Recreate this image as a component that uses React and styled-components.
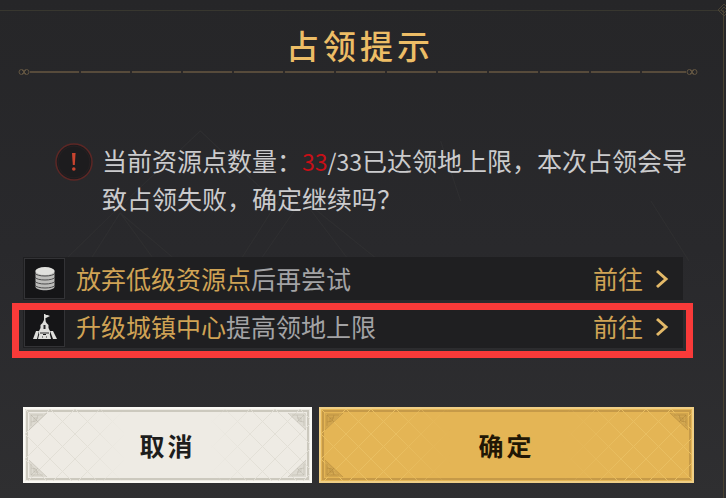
import styled, { createGlobalStyle } from "styled-components";

const GlobalStyle = createGlobalStyle`
  * { box-sizing: border-box; }
  body {
    margin: 0;
    background: #29292b;
    font-family: "Noto Sans CJK SC", sans-serif;
  }
  button {
    font-family: inherit;
    padding: 0;
    border: 0;
    cursor: pointer;
  }
`;

const ROWS = [
  { id: "abandon", icon: "coins", strong: "放弃低级资源点", rest: "后再尝试" },
  { id: "upgrade", icon: "castle", strong: "升级城镇中心", rest: "提高领地上限", marked: true },
];

const Knot = () => (
  <KnotSvg viewBox="0 0 12 8" fill="none" stroke="#625541" aria-hidden="true">
    <circle cx="3.5" cy="4" r="2.5" />
    <circle cx="8.5" cy="4" r="2.5" />
    <path d="M4 2l4 4M4 6l4-4" />
  </KnotSvg>
);

const CoinsIcon = () => (
  <svg width="22" height="28" viewBox="0 0 22 28" aria-hidden="true">
    <path d="M1.500 5.500v16c0 5 19 5 19 0v-16z" fill="#bcbcba" />
    <ellipse cx="11" cy="6" rx="9.500" ry="4" fill="#e0e0dd" />
    <path
      d="M1 8c1 4 19 4 20 0M1 12c1 4 19 4 20 0M1 16c1 4 19 4 20 0M1 20c1 4 19 4 20 0"
      fill="none"
      stroke="#4c4c4d"
    />
  </svg>
);

const CastleIcon = () => (
  <svg width="26" height="28" viewBox="0 0 26 28" fill="#dededb" aria-hidden="true">
    <path d="M12 1h1.500v7H12zM13 1l5 2-5 2.500z" />
    <path d="M12.500 6l2 4 2 2v3l1.500 3v3h-11v-3L8.500 15v-3l2-2z" />
    <path d="M4 18h3l-2 8H1zM8 18h3v8H6zM14 18h3l2 8h-5zM18 18h3l4 8h-4zM11 22h3v4h-3z" />
    <path d="M11.500 12h2v4h-2z" fill="#28282a" />
    <path d="M8 20h9M10 24h1M14 24h1" stroke="#28282a" />
  </svg>
);

const AlertIcon = () => (
  <svg width="40" height="40" viewBox="0 0 40 40" aria-hidden="true">
    <circle cx="20" cy="20" r="18" fill="#1d1c1e" stroke="#5c2725" strokeWidth="1.500" />
    <circle cx="20" cy="20" r="16" fill="none" stroke="#262022" />
    <path d="M18 11h3.600l-.8 12h-2z" fill="#c8442f" />
    <circle cx="19.800" cy="27" r="1.800" fill="#c8442f" />
  </svg>
);

const Chevron = () => (
  <svg width="14" height="20" viewBox="0 0 14 20" fill="none" stroke="#e3b968" strokeWidth="3" aria-hidden="true">
    <path d="M2 2l9 8-9 8" />
  </svg>
);

// faint arches behind the text
const Arches = () => (
  <Backdrop viewBox="0 0 722 487" preserveAspectRatio="none" fill="none" stroke="#2f2f31" aria-hidden="true">
    <path d="M68 246L115 200l85 -80l85 80M92 246l28-44 32 44M120 202l52 44" />
    <path d="M242 246l42-66M262 246l40-58 44 58M302 188l72 58M460 190l-20-60M650 190l38 60" />
  </Backdrop>
);

const Corner = ({ x, y, flip, color }) => (
  <svg x={x} y={y} overflow="visible">
    <g transform={`scale(${flip})`} fill="none" stroke={color}>
      <path d="M4 4h18L4 21z" fill={color} fillOpacity="0.3" stroke="none" />
      <path d="M6 17V6h12M9 13V9h4M6 6l7 7M6 13l5-1 2-6M22 4L4 21" strokeOpacity="0.45" />
    </g>
  </svg>
);

const ButtonOrnament = ({ id, line, lattice }) => (
  <Ornament aria-hidden="true">
    <defs>
      <pattern id={`${id}-lattice`} width="25" height="25" patternUnits="userSpaceOnUse">
        <path d="M0 0l25 25M25 0L0 25" stroke={lattice} fill="none" />
      </pattern>
      <linearGradient id={`${id}-fade`}>
        <stop offset="0" stopColor="#fff" />
        <stop offset="0.2" stopColor="#fff" />
        <stop offset="0.35" stopColor="#000" />
        <stop offset="0.65" stopColor="#000" />
        <stop offset="0.82" stopColor="#fff" />
      </linearGradient>
      <mask id={`${id}-mask`}>
        <rect width="100%" height="100%" fill={`url(#${id}-fade)`} />
      </mask>
    </defs>
    <rect width="100%" height="100%" fill={`url(#${id}-lattice)`} mask={`url(#${id}-mask)`} />
    <Corner x="0" y="0" flip="1 1" color={line} />
    <Corner x="100%" y="0" flip="-1 1" color={line} />
    <Corner x="0" y="100%" flip="1 -1" color={line} />
    {id !== "confirm" && <Corner x="100%" y="100%" flip="-1 -1" color={line} />}
  </Ornament>
);

export default function App() {
  return (
    <>
      <GlobalStyle />
      <Page>
        <Panel role="dialog" aria-labelledby="dialog-title">
          <Arches />
          <PanelCorner viewBox="0 0 14 14" fill="none" stroke="#4a4335" aria-hidden="true">
            <path d="M7 1l6 6-6 6-6-6zM7 4l3 3-3 3-3-3z" />
          </PanelCorner>
          <Header>
            <Title id="dialog-title">占领提示</Title>
            <Divider>
              <Knot />
              <DividerLine />
              <Knot />
            </Divider>
          </Header>
          <Notice>
            <AlertIcon />
            <Message>
              当前资源点数量：<Count $over>33</Count>
              <Count>/33</Count>已达领地上限，本次占领会导
              <br />
              致占领失败，确定继续吗？
            </Message>
          </Notice>
          <Rows>
            {ROWS.map((row) => (
              <Row key={row.id} $marked={row.marked}>
                <IconBox>{row.icon === "coins" ? <CoinsIcon /> : <CastleIcon />}</IconBox>
                <RowText>
                  <Gold>{row.strong}</Gold>
                  {row.rest}
                </RowText>
                <GoButton type="button">
                  前往
                  <Chevron />
                </GoButton>
              </Row>
            ))}
          </Rows>
          <Actions>
            <ActionButton type="button">
              <ButtonOrnament id="cancel" line="#b5b2a6" lattice="#e2dfd6" />
              <Label>取消</Label>
            </ActionButton>
            <ActionButton type="button" $primary>
              <ButtonOrnament id="confirm" line="#a9803a" lattice="#e9bf62" />
              <Label>确定</Label>
            </ActionButton>
          </Actions>
        </Panel>
      </Page>
    </>
  );
}

const Page = styled.main`
  min-height: 100vh;
  display: flex;
  padding: 10px 2px 0 0;
  background: linear-gradient(#262628, #29292c 50%, #2f2f31);
`;

const Panel = styled.section`
  position: relative;
  flex: 1;
  border-top: 1px solid #38372f;
  border-right: 1px solid #4a4230;
`;

const Backdrop = styled.svg`
  position: absolute;
  inset: 0;
  width: 100%;
  height: 100%;
`;

const PanelCorner = styled.svg`
  position: absolute;
  top: -8px;
  right: -8px;
  width: 14px;
  height: 14px;
`;

const Header = styled.header`
  position: relative;
  padding: 14px 25px 0 18px;
`;

const Title = styled.h1`
  margin: 0;
  color: #edbd66;
  font-size: 33px;
  font-weight: 500;
  line-height: 41px;
  letter-spacing: 4px;
  text-indent: 4px;
  text-align: center;
`;

const Divider = styled.div`
  display: flex;
  align-items: center;
  height: 12px;
`;

const KnotSvg = styled.svg`
  width: 12px;
  height: 8px;
`;

const DividerLine = styled.div`
  flex: 1;
  height: 2px;
  background: repeating-linear-gradient(90deg, #574b3b 0 49px, #2c2929 49px 51px);
`;

const Notice = styled.div`
  position: relative;
  display: flex;
  align-items: flex-start;
  gap: 8px;
  padding: 64px 34px 0 54px;

  svg { flex: none; }
`;

const Message = styled.p`
  margin: 0;
  color: #cbcbcd;
  font-size: 25px;
  line-height: 37px;
`;

const Count = styled.span`
  color: ${(p) => (p.$over ? "#c80f17" : "inherit")};
  font-size: 23px;
`;

const Rows = styled.ul`
  position: relative;
  display: grid;
  gap: 5px;
  margin: 40px 40px 0 23px;
  padding: 0;
  list-style: none;
`;

const Row = styled.li`
  position: relative;
  display: flex;
  align-items: center;
  gap: 11px;
  height: 43px;
  padding: 0 14px 0 1px;
  background: #1f1f21;

  /* red marker around the suggested row */
  &::after {
    content: "";
    display: ${(p) => (p.$marked ? "block" : "none")};
    position: absolute;
    inset: -2px -10px -10px -11px;
    border: 7px solid #f93a39;
    pointer-events: none;
  }
`;

const IconBox = styled.span`
  display: grid;
  place-items: center;
  width: 41px;
  height: 41px;
  border: 1px solid #333336;
  background: #151517;
`;

const RowText = styled.span`
  flex: 1;
  color: #a3a3a5;
  font-size: 25px;
  line-height: 37px;
`;

const Gold = styled.strong`
  color: #d0a355;
  font-weight: 400;
`;

const GoButton = styled.button`
  display: flex;
  align-items: center;
  gap: 12px;
  background: none;
  color: #d0a355;
  font-size: 25px;
  line-height: 37px;
`;

const Actions = styled.footer`
  position: relative;
  display: grid;
  grid-template-columns: 289fr 375fr;
  gap: 7px;
  margin: 59px 29px 15px 23px;
`;

const ActionButton = styled.button`
  position: relative;
  height: 76px;
  border: 2px solid ${(p) => (p.$primary ? "#f0cf85" : "#faf9f4")};
  background: ${(p) => (p.$primary ? "#e4b555" : "#eeebe4")};
  color: ${(p) => (p.$primary ? "#211705" : "#1d1d1c")};

  &::before {
    content: "";
    position: absolute;
    inset: 1px;
    border: 2px solid ${(p) => (p.$primary ? "#c69a48" : "#ccc9be")};
  }
`;

const Ornament = styled.svg`
  position: absolute;
  inset: 0;
  width: 100%;
  height: 100%;
`;

const Label = styled.span`
  position: relative;
  font-size: 25px;
  font-weight: 700;
  line-height: 37px;
  letter-spacing: 3px;
`;
